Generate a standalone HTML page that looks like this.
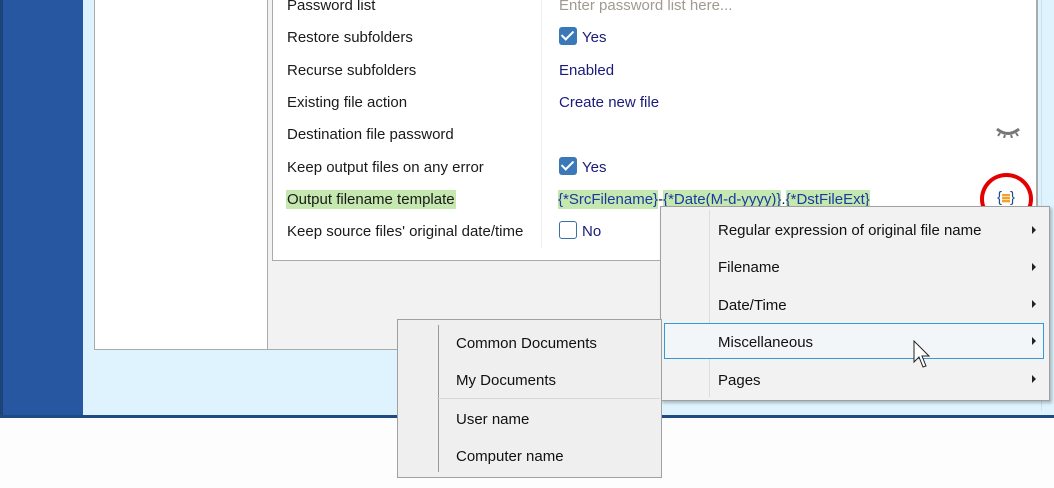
<html><head><style>
body{margin:0;width:1054px;height:488px;overflow:hidden;background:#fdfdfd;font-family:"Liberation Sans",sans-serif;font-size:15px;color:#1a1a1a;position:relative}
div,span{position:absolute;box-sizing:border-box}
.lbl{left:287px;white-space:nowrap;margin-top:2px}
.val{left:559px;white-space:nowrap;color:#1a1a7a;margin-top:2px}
.cb{width:18px;height:18px;border-radius:3px;background:#3b78b8}
.cb::after{content:"";position:absolute;left:5px;top:1px;width:5px;height:10px;border:solid #fff;border-width:0 2.5px 2.5px 0;transform:rotate(45deg)}
.mi{white-space:nowrap;color:#111;margin-top:2px}
.ar{width:0;height:0;border-left:4px solid #222;border-top:4px solid transparent;border-bottom:4px solid transparent}
.g{background:#c5e8b0}
</style></head><body>
<div style="left:0;top:0;width:83px;height:418px;background:#2757a0;border-left:3px solid #1c4478"></div>
<div style="left:83px;top:0;width:971px;height:416px;background:#def3fd"></div>
<div style="left:0;top:415px;width:1054px;height:3px;background:#1f4a82"></div>
<div style="left:94px;top:-1px;width:174px;height:351px;background:#fff;border:1px solid #aaa"></div>
<div style="left:267px;top:-1px;width:771px;height:351px;background:#f2f2f2;border:1px solid #aaa"></div>
<div style="left:272px;top:-1px;width:765px;height:262px;background:#fff;border:1px solid #aaa;border-top:none"></div>
<div style="left:541px;top:0;width:1px;height:248px;background:#eee"></div>
<div style="left:1041px;top:0;width:1px;height:410px;background:#c9dfec"></div>
<div class="lbl" style="top:-5px">Password list</div>
<div class="val" style="top:-5px;color:#a09a90">Enter password list here...</div>
<div class="lbl" style="top:27px">Restore subfolders</div>
<div class="cb" style="left:559px;top:27px"></div><div class="val" style="left:582px;top:27px">Yes</div>
<div class="lbl" style="top:60px">Recurse subfolders</div>
<div class="val" style="top:60px">Enabled</div>
<div class="lbl" style="top:92px">Existing file action</div>
<div class="val" style="top:92px">Create new file</div>
<div class="lbl" style="top:124px">Destination file password</div>
<svg style="position:absolute;left:995px;top:126px" width="26" height="12"><path d="M2 3 Q13 12 24 3" stroke="#777" stroke-width="3" fill="none"/><path d="M5 7l-2 3M10 9l-1 3M16 9l1 3M21 7l2 3" stroke="#777" stroke-width="2"/></svg>
<div class="lbl" style="top:157px">Keep output files on any error</div>
<div class="cb" style="left:559px;top:157px"></div><div class="val" style="left:582px;top:157px">Yes</div>
<div class="lbl g" style="top:188px;left:286px;padding:1px 1px">Output filename template</div>
<div class="val" style="top:189px;left:558px;color:#1a3aa0"><span class="g" style="position:static;padding:1px 0">{*SrcFilename}</span><span style="position:static;color:#111">-</span><span class="g" style="position:static;padding:1px 0">{*Date(M-d-yyyy)}</span><span style="position:static;color:#111">.</span><span class="g" style="position:static;padding:1px 0">{*DstFileExt}</span></div>
<div style="left:997px;top:189px;color:#1a4f8f;font-size:15px;white-space:nowrap">{<span style="position:static;display:inline-block;width:8px;height:9px;background:repeating-linear-gradient(#f5a030 0 2px,#fde0b0 2px 3px);vertical-align:-1px"></span>}</div>
<div style="left:980px;top:173px;width:53px;height:52px;border:4px solid #e40000;border-radius:50%"></div>
<div class="lbl" style="top:221px">Keep source files' original date/time</div>
<div style="left:559px;top:221px;width:18px;height:18px;border:1.5px solid #3b6fa8;border-radius:3px;background:#fff"></div><div class="val" style="left:582px;top:221px">No</div>

<div style="left:660px;top:206px;width:390px;height:195px;background:#f2f2f2;border:1px solid #a0a0a0;box-shadow:2px 2px 3px rgba(0,0,0,.25)"></div>
<div style="left:709px;top:210px;width:1px;height:187px;background:#ddd"></div>
<div style="left:664px;top:323px;width:380px;height:36px;border:1px solid #3399dd;background:#f3f6f9"></div>
<div class="mi" style="left:718px;top:220px">Regular expression of original file name</div><div class="ar" style="left:1032px;top:226px"></div>
<div class="mi" style="left:718px;top:257px">Filename</div><div class="ar" style="left:1032px;top:263px"></div>
<div class="mi" style="left:718px;top:295px">Date/Time</div><div class="ar" style="left:1032px;top:300px"></div>
<div class="mi" style="left:718px;top:332px">Miscellaneous</div><div class="ar" style="left:1032px;top:337px"></div>
<div class="mi" style="left:718px;top:370px">Pages</div><div class="ar" style="left:1032px;top:375px"></div>
<svg style="position:absolute;left:913px;top:340px" width="20" height="30"><path d="M1 1 L1 22 L6 17 L10 27 L13 26 L9 16 L16 16 Z" fill="#fff" stroke="#222" stroke-width="1"/></svg>

<div style="left:397px;top:319px;width:265px;height:159px;background:#efefef;border:1px solid #a0a0a0"></div>
<div style="left:438px;top:325px;width:1px;height:147px;background:#999"></div>
<div style="left:437px;top:398px;width:223px;height:1px;background:#d8d8d8"></div>
<div class="mi" style="left:456px;top:333px">Common Documents</div>
<div class="mi" style="left:456px;top:370px">My Documents</div>
<div class="mi" style="left:456px;top:409px">User name</div>
<div class="mi" style="left:456px;top:446px">Computer name</div>
</body></html>
